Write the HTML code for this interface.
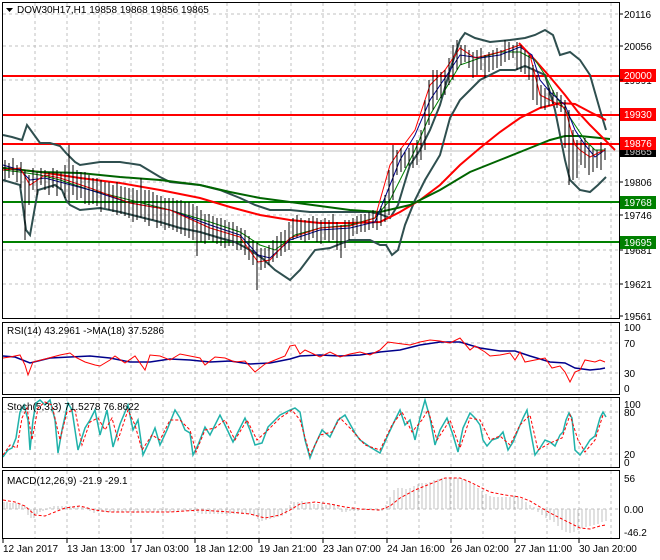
<!DOCTYPE html>
<html><head><meta charset="utf-8"><style>
html,body{margin:0;padding:0;background:#fff;}
body{width:660px;height:560px;overflow:hidden;font-family:"Liberation Sans",sans-serif;}
svg{display:block}
text{font-family:"Liberation Sans",sans-serif;font-size:10px;fill:#000}
.c{shape-rendering:crispEdges}
</style></head><body>
<svg width="660" height="560" viewBox="0 0 660 560">
<rect width="660" height="560" fill="#fff"/>
<!-- grids -->
<g class="c" stroke="#c0c0c0" stroke-dasharray="3,3" stroke-width="1">
<path d="M35 3V318M67 3V318M99 3V318M131 3V318M163 3V318M195 3V318M227 3V318M259 3V318M291 3V318M323 3V318M355 3V318M387 3V318M419 3V318M451 3V318M483 3V318M515 3V318M547 3V318M579 3V318M611 3V318"/>
<path d="M35 323V394M67 323V394M99 323V394M131 323V394M163 323V394M195 323V394M227 323V394M259 323V394M291 323V394M323 323V394M355 323V394M387 323V394M419 323V394M451 323V394M483 323V394M515 323V394M547 323V394M579 323V394M611 323V394"/>
<path d="M35 398V467M67 398V467M99 398V467M131 398V467M163 398V467M195 398V467M227 398V467M259 398V467M291 398V467M323 398V467M355 398V467M387 398V467M419 398V467M451 398V467M483 398V467M515 398V467M547 398V467M579 398V467M611 398V467"/>
<path d="M35 471V538M67 471V538M99 471V538M131 471V538M163 471V538M195 471V538M227 471V538M259 471V538M291 471V538M323 471V538M355 471V538M387 471V538M419 471V538M451 471V538M483 471V538M515 471V538M547 471V538M579 471V538M611 471V538"/>
<path d="M3 14H619M3 46H619M3 80H619M3 115H619M3 182H619M3 215H619M3 250H619M3 284H619"/>
<path d="M3 343H619M3 373H619M3 412H619M3 454H619M3 509H619"/>
</g>
<line class="c" x1="3" y1="151" x2="619" y2="151" stroke="#c0c0c0"/>
<!-- level lines -->
<g class="c" stroke-width="2">
<line x1="3" y1="76" x2="619" y2="76" stroke="#ff0000"/>
<line x1="3" y1="115" x2="619" y2="115" stroke="#ff0000"/>
<line x1="3" y1="144" x2="619" y2="144" stroke="#ff0000"/>
<line x1="3" y1="202" x2="619" y2="202" stroke="#008000"/>
<line x1="3" y1="242" x2="619" y2="242" stroke="#008000"/>
</g>
<!-- bollinger -->
<g fill="none" stroke="#2f4f4f" stroke-width="2">
<polyline points="3,135 12,137 22,140 27,125 40,143 50,143 60,146 66,153 75,162 80,165 100,162 120,162 140,165 160,177 170,182 180,183 200,185 220,190 240,198 255,205 270,210 290,210 310,212 330,212 350,212 370,212 380,214 390,218 398,205 410,165 420,150 430,130 440,105 450,70 460,40 465,33 475,38 490,42 510,40 525,38 535,35 545,30 553,35 560,55 570,52 580,60 590,75 600,110 606,130"/>
<polyline points="3,180 20,185 26,230 30,235 38,190 55,185 62,190 66,200 70,205 80,210 100,208 120,212 140,217 160,222 180,228 200,232 220,238 235,242 250,250 262,258 275,270 290,280 300,270 315,250 330,248 350,240 370,240 380,245 386,245 392,255 398,250 405,225 415,200 425,180 440,155 450,118 460,100 470,90 480,80 500,70 515,70 525,66 545,75 555,110 565,160 570,180 580,190 590,192 598,185 606,177"/>
</g>
<!-- slow MAs -->
<polyline fill="none" stroke="#ff0000" stroke-width="2" points="3,168 40,172 80,178 120,183 160,190 200,198 230,207 260,215 290,220 320,223 350,223 380,222 400,212 420,200 440,185 460,165 480,148 500,132 520,118 540,108 560,103 575,104 590,112 606,120"/>
<polyline fill="none" stroke="#006400" stroke-width="2" points="3,168 40,172 80,173 120,177 160,180 200,185 230,192 260,198 290,202 320,206 350,210 380,212 410,205 440,190 470,172 500,160 530,148 550,140 565,136 580,136 600,138 610,139"/>
<polyline fill="none" stroke="#ff0000" stroke-width="2" points="519,43 535,60 550,77 565,95 578,112 590,125 605,140 615,150"/>
<!-- fast MAs -->
<polyline fill="none" stroke="#008000" stroke-width="1" points="3,170 20,172 40,175 60,180 90,190 130,200 170,210 210,222 240,232 260,245 275,250 295,235 320,228 350,225 375,218 390,200 400,180 415,150 430,115 445,90 460,65 480,58 500,52 520,52 535,60 545,75 555,95 565,110 575,125 585,140 595,150 605,150"/>
<polyline fill="none" stroke="#00008b" stroke-width="1" points="3,165 20,170 30,180 45,178 60,182 90,190 130,203 170,210 210,225 240,235 258,255 270,258 290,240 320,230 350,228 375,222 388,190 400,160 415,135 430,100 445,78 460,55 480,58 500,55 520,47 532,55 540,80 550,92 565,105 575,130 585,145 595,157 605,150"/>
<polyline fill="none" stroke="#ff0000" stroke-width="1" points="3,170 20,168 30,185 45,175 60,178 90,188 130,203 170,210 210,228 240,237 258,262 270,260 290,238 320,228 350,226 375,218 390,165 400,150 415,130 430,85 445,70 460,48 475,58 500,52 520,45 530,55 540,95 550,100 565,108 575,145 580,150 590,157 600,152 605,150"/>
<!-- bars -->
<path class="c" fill="none" stroke="#000" stroke-width="1" d="M5 160V180M9 163V178M13 158V175M17 165V182M21 162V188M25 170V240M29 175V205M33 168V190M37 172V195M41 168V185M45 170V190M49 172V195M53 168V188M57 170V196M61 172V190M65 165V198M69 145V202M73 165V195M77 170V200M81 172V198M85 172V204M89 175V205M93 178V204M97 178V206M101 180V212M105 182V208M109 182V210M113 185V212M117 182V215M121 186V214M125 187V216M129 188V218M133 188V222M137 190V220M141 178V218M145 190V222M149 190V226M153 192V220M157 195V228M161 196V226M165 198V230M169 198V228M173 198V230M177 200V232M181 200V234M185 202V236M189 202V238M193 204V240M197 206V256M201 210V242M205 214V244M209 214V240M213 216V242M217 218V244M221 218V246M225 220V248M229 222V246M233 222V246M237 226V250M241 228V250M245 230V255M249 236V260M253 240V265M257 242V290M261 248V270M265 248V268M269 245V265M273 240V262M277 236V258M281 232V256M285 230V252M289 222V250M293 218V240M297 215V238M301 218V240M305 220V242M309 218V240M313 216V238M317 218V242M321 220V244M325 218V240M329 220V242M333 214V240M337 222V250M341 225V258M345 220V248M349 220V240M353 218V236M357 216V234M361 214V232M365 214V232M369 212V230M373 210V228M377 212V230M381 206V226M385 195V222M389 170V215M393 145V200M397 150V175M401 148V172M405 152V168M409 148V166M413 145V168M417 140V165M421 130V160M425 100V150M429 80V125M433 70V110M437 70V100M441 72V98M445 70V95M449 58V85M453 45V80M457 40V70M461 45V65M465 45V62M469 50V68M473 52V78M477 50V75M481 48V70M485 55V78M489 52V72M493 50V70M497 48V68M501 50V66M505 40V62M509 42V60M513 45V58M517 42V70M521 45V72M525 50V74M529 55V80M533 65V100M537 75V105M541 85V108M545 88V110M549 88V106M553 90V104M557 92V108M561 95V112M565 100V148M569 110V185M573 130V180M577 140V178M581 140V165M585 138V168M589 145V175M593 148V172M597 150V168M601 142V170M605 148V160"/>
<!-- axis right labels -->
<g>
<text x="624" y="18">20116</text>
<text x="624" y="50">20056</text>
<text x="624" y="84">19991</text>
<text x="624" y="186">19806</text>
<text x="624" y="219">19746</text>
<text x="624" y="254">19681</text>
<text x="624" y="288">19621</text>
<text x="624" y="320">19561</text>
</g>
<rect x="620" y="146" width="36" height="11" fill="#000"/>
<text x="624" y="155" style="fill:#c0c0c0">19865</text>
<rect x="620" y="69" width="36" height="13" fill="#ff0000"/><text x="624" y="79" style="fill:#fff">20000</text>
<rect x="620" y="108" width="36" height="13" fill="#ff0000"/><text x="624" y="118" style="fill:#fff">19930</text>
<rect x="620" y="137" width="36" height="13" fill="#ff0000"/><text x="624" y="147" style="fill:#fff">19876</text>
<rect x="620" y="196" width="36" height="13" fill="#008000"/><text x="624" y="206" style="fill:#fff">19768</text>
<rect x="620" y="236" width="36" height="13" fill="#008000"/><text x="624" y="246" style="fill:#fff">19695</text>
<!-- RSI -->
<polyline fill="none" stroke="#00008b" stroke-width="1.5" points="3,356 15,357 30,363 50,358 70,357 90,356 110,358 130,362 150,362 170,359 190,360 210,362 230,361 250,364 270,363 290,359 300,356 320,355 340,356 360,355 380,352 400,350 420,345 440,342 460,342 480,348 500,351 515,351 530,356 550,362 565,363 575,368 590,370 600,369 605,368"/>
<polyline fill="none" stroke="#ff0000" stroke-width="1" points="3,358 10,357 20,355 25,365 28,375 33,362 45,359 60,355 70,353 75,357 85,362 95,365 100,366 110,360 115,356 125,363 135,356 145,370 150,355 160,356 170,360 180,354 190,356 200,358 205,365 215,357 225,358 235,362 245,361 255,372 265,364 275,360 285,356 290,346 295,345 300,354 305,350 320,357 330,352 340,357 350,354 360,352 370,355 380,350 388,342 395,343 410,345 420,342 430,340 440,341 450,343 460,338 465,344 470,350 475,346 485,352 490,356 500,355 510,353 515,360 520,352 525,362 535,360 545,358 552,368 560,366 565,372 570,382 575,372 580,370 585,360 595,362 600,360 605,362"/>
<!-- Stoch -->
<polyline fill="none" stroke="#20b2aa" stroke-width="1.5" points="3,457 8,450 12,448 16,438 20,412 24,405 28,420 30,450 33,420 36,403 40,400 45,405 50,400 55,420 58,453 62,430 68,403 72,410 78,450 85,428 90,420 95,410 100,435 107,410 113,447 120,424 128,405 133,430 138,420 143,455 150,440 155,428 160,445 167,430 175,410 180,418 185,430 190,433 193,455 198,445 205,427 210,435 215,425 220,415 225,425 233,442 238,432 245,418 250,430 255,445 262,443 268,427 275,420 280,415 290,410 295,408 300,412 305,440 310,458 315,445 322,430 330,437 338,420 345,415 355,433 360,440 370,447 380,453 388,435 395,420 400,410 405,425 410,420 415,440 420,418 425,400 430,418 435,445 440,430 447,418 453,435 458,452 463,428 470,413 475,418 480,425 483,440 487,446 492,440 498,438 503,432 508,450 513,442 518,430 523,418 527,410 530,428 535,455 540,448 545,440 550,442 555,446 560,435 563,432 566,420 569,413 572,418 575,450 580,455 585,448 590,440 595,436 600,418 603,412 606,417"/>
<polyline fill="none" stroke="#ff0000" stroke-width="1" stroke-dasharray="3,2" points="3,455 10,445 17,448 22,418 27,408 32,440 38,408 45,402 52,405 60,440 67,412 75,410 82,445 90,422 98,418 105,430 112,418 118,440 128,410 135,425 142,450 152,435 160,440 170,420 180,420 190,430 196,452 205,430 215,428 225,420 235,440 247,420 257,440 268,430 280,418 292,410 300,420 310,455 320,435 332,432 340,418 350,428 365,445 380,450 392,425 402,412 412,432 422,420 428,410 437,440 450,420 460,448 470,418 480,420 490,440 500,436 510,445 520,425 530,415 538,450 550,443 562,438 570,415 578,440 585,452 595,440 603,415"/>
<!-- MACD -->
<g class="c" stroke="#c0c0c0" stroke-width="1">
<path d="M4 502V509M7 502V509M10 503V509M13 503V509M16 503V509M19 504V509M22 505V509M25 506V509M28 509V515M31 509V518M34 509V518M37 509V514M40 509V512M43 509V511M46 509V510M50 507V509M54 506V509M58 506V509M62 506V509M66 506V509M70 506V509M74 506V509M78 506V509M82 507V509M86 508V509M90 509V511M94 509V513M98 509V512M102 509V512M106 509V512M110 509V512M114 509V512M118 509V512M122 509V512M126 509V512M130 509V512M134 509V513M138 509V512M142 509V512M146 509V512M150 509V512M154 509V512M158 509V512M162 509V512M166 509V512M170 509V512M174 509V512M178 509V512M182 509V511M186 509V511M190 509V511M194 509V512M198 509V513M202 509V514M206 509V514M210 509V514M214 509V514M218 509V514M222 509V514M226 509V514M230 509V514M234 509V514M238 509V514M242 509V514M246 509V514M250 509V514M254 509V516M258 509V519M262 509V521M266 509V520M270 509V519M274 509V518M278 509V517M282 509V516M286 509V514M290 505V509M294 502V509M298 502V509M302 501V509M306 502V509M310 503V509M314 504V509M318 504V509M322 503V509M326 505V509M330 504V509M334 504V509M338 506V509M342 509V512M346 509V512M350 509V511M354 509V511M358 509V511M362 509V510M366 509V510M370 509V510M374 509V510M378 509V511M382 509V511M386 505V509M390 497V509M394 490V509M398 488V509M402 488V509M406 489V509M410 488V509M414 486V509M418 484V509M422 483V509M426 483V509M430 482V509M434 480V509M438 479V509M442 478V509M446 478V509M450 478V509M454 478V509M458 478V509M462 479V509M466 480V509M470 482V509M474 485V509M478 488V509M482 491V509M486 494V509M490 496V509M494 497V509M498 497V509M502 497V509M506 497V509M510 497V509M514 496V509M518 497V509M522 499V509M526 502V509M530 505V509M534 507V509M538 509V512M542 509V515M546 509V518M550 509V520M554 509V522M558 509V526M562 509V530M566 509V532M570 509V533M574 509V532M578 509V530M582 509V528M586 509V527M590 509V526M594 509V525M598 509V524M602 509V522M606 509V521"/>
</g>
<polyline fill="none" stroke="#ff0000" stroke-width="1" stroke-dasharray="3,2" points="3,500 15,502 25,506 35,515 45,516 55,512 65,508 80,506 95,510 110,512 140,512 170,512 200,510 230,512 250,514 265,518 280,515 290,510 300,504 315,502 330,504 345,507 360,509 380,510 390,506 400,498 415,490 430,484 445,478 460,478 470,482 480,487 490,492 505,495 520,497 530,501 540,507 550,513 560,518 570,523 580,528 590,529 600,526 606,525"/>
<!-- panel borders -->
<g class="c" fill="none" stroke="#000" stroke-width="1">
<rect x="2.5" y="2.5" width="617" height="316"/>
<rect x="2.5" y="322.5" width="617" height="72"/>
<rect x="2.5" y="397.5" width="617" height="70"/>
<rect x="2.5" y="470.5" width="617" height="68"/>
</g>
<g class="c" stroke="#000"><path d="M620 14h3M620 46h3M620 80h3M620 182h3M620 215h3M620 250h3M620 284h3M620 316h3M3 539v4M67 539v4M131 539v4M195 539v4M259 539v4M323 539v4M387 539v4M451 539v4M515 539v4M579 539v4"/></g>
<!-- header -->
<path d="M6 8h7l-3.5 4z" fill="#000"/>
<text x="17" y="13">DOW30H17,H1 19858 19868 19856 19865</text>
<text x="7" y="334">RSI(14) 43.2961 -&gt;MA(18) 37.5286</text>
<text x="7" y="410">Stoch(5,3,3) 71.5278 76.8622</text>
<text x="7" y="484">MACD(12,26,9) -21.9 -29.1</text>
<text x="624" y="331">100</text><text x="624" y="347">70</text><text x="624" y="377">30</text><text x="624" y="392">0</text>
<text x="624" y="408">100</text><text x="624" y="416">80</text><text x="624" y="458">20</text><text x="624" y="466">0</text>
<text x="624" y="482">56</text><text x="624" y="513">0.00</text><text x="624" y="536">-46.2</text>
<g>
<text x="3" y="552">12 Jan 2017</text>
<text x="67" y="552">13 Jan 13:00</text>
<text x="131" y="552">17 Jan 03:00</text>
<text x="195" y="552">18 Jan 12:00</text>
<text x="259" y="552">19 Jan 21:00</text>
<text x="323" y="552">23 Jan 07:00</text>
<text x="387" y="552">24 Jan 16:00</text>
<text x="451" y="552">26 Jan 02:00</text>
<text x="515" y="552">27 Jan 11:00</text>
<text x="579" y="552">30 Jan 20:00</text>
</g>
</svg>
</body></html>
